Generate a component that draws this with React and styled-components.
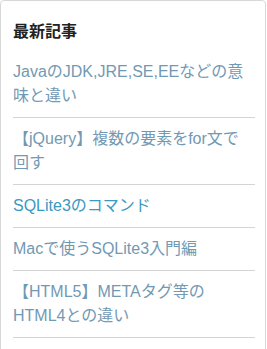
import React from 'react';
import styled, { createGlobalStyle } from 'styled-components';

const GlobalStyle = createGlobalStyle`
  html, body {
    overflow: hidden;
  }
  body {
    margin: 0;
    background: #fff;
    font-family: 'Liberation Sans', 'Noto Sans CJK JP', sans-serif;
  }
`;

const articles = [
  { title: 'JavaのJDK,JRE,SE,EEなどの意味と違い' },
  { title: '【jQuery】複数の要素をfor文で回す' },
  { title: 'SQLite3のコマンド', active: true },
  { title: 'Macで使うSQLite3入門編' },
  { title: '【HTML5】METAタグ等のHTML4との違い' },
];

function App() {
  return (
    <>
      <GlobalStyle />
      <Widget>
        <Heading>最新記事</Heading>
        <List>
          {articles.map((a, i) => (
            <Item key={i}>
              <ItemLink href="#" $active={a.active}>
                {a.title}
              </ItemLink>
            </Item>
          ))}
        </List>
      </Widget>
    </>
  );
}

export default App;

const Widget = styled.section`
  box-sizing: border-box;
  width: 266px;
  height: 360px;
  border: 1px solid #d8d8d8;
  border-radius: 4px;
  padding: 19px 10px 0 12px;
  background: #fff;
`;

const Heading = styled.h3`
  margin: 0 0 7px;
  font-size: 16px;
  line-height: 24px;
  font-weight: bold;
  color: #222;
`;

const List = styled.ul`
  margin: 0;
  padding: 0;
  list-style: none;
`;

const Item = styled.li`
  padding: 9px 0;
  border-bottom: 1px solid #d4d4d4;
`;

const ItemLink = styled.a`
  display: block;
  padding-right: 7px;
  font-size: 16px;
  line-height: 24px;
  text-decoration: none;
  color: ${(p) => (p.$active ? '#3b98c2' : '#7299b3')};
`;
